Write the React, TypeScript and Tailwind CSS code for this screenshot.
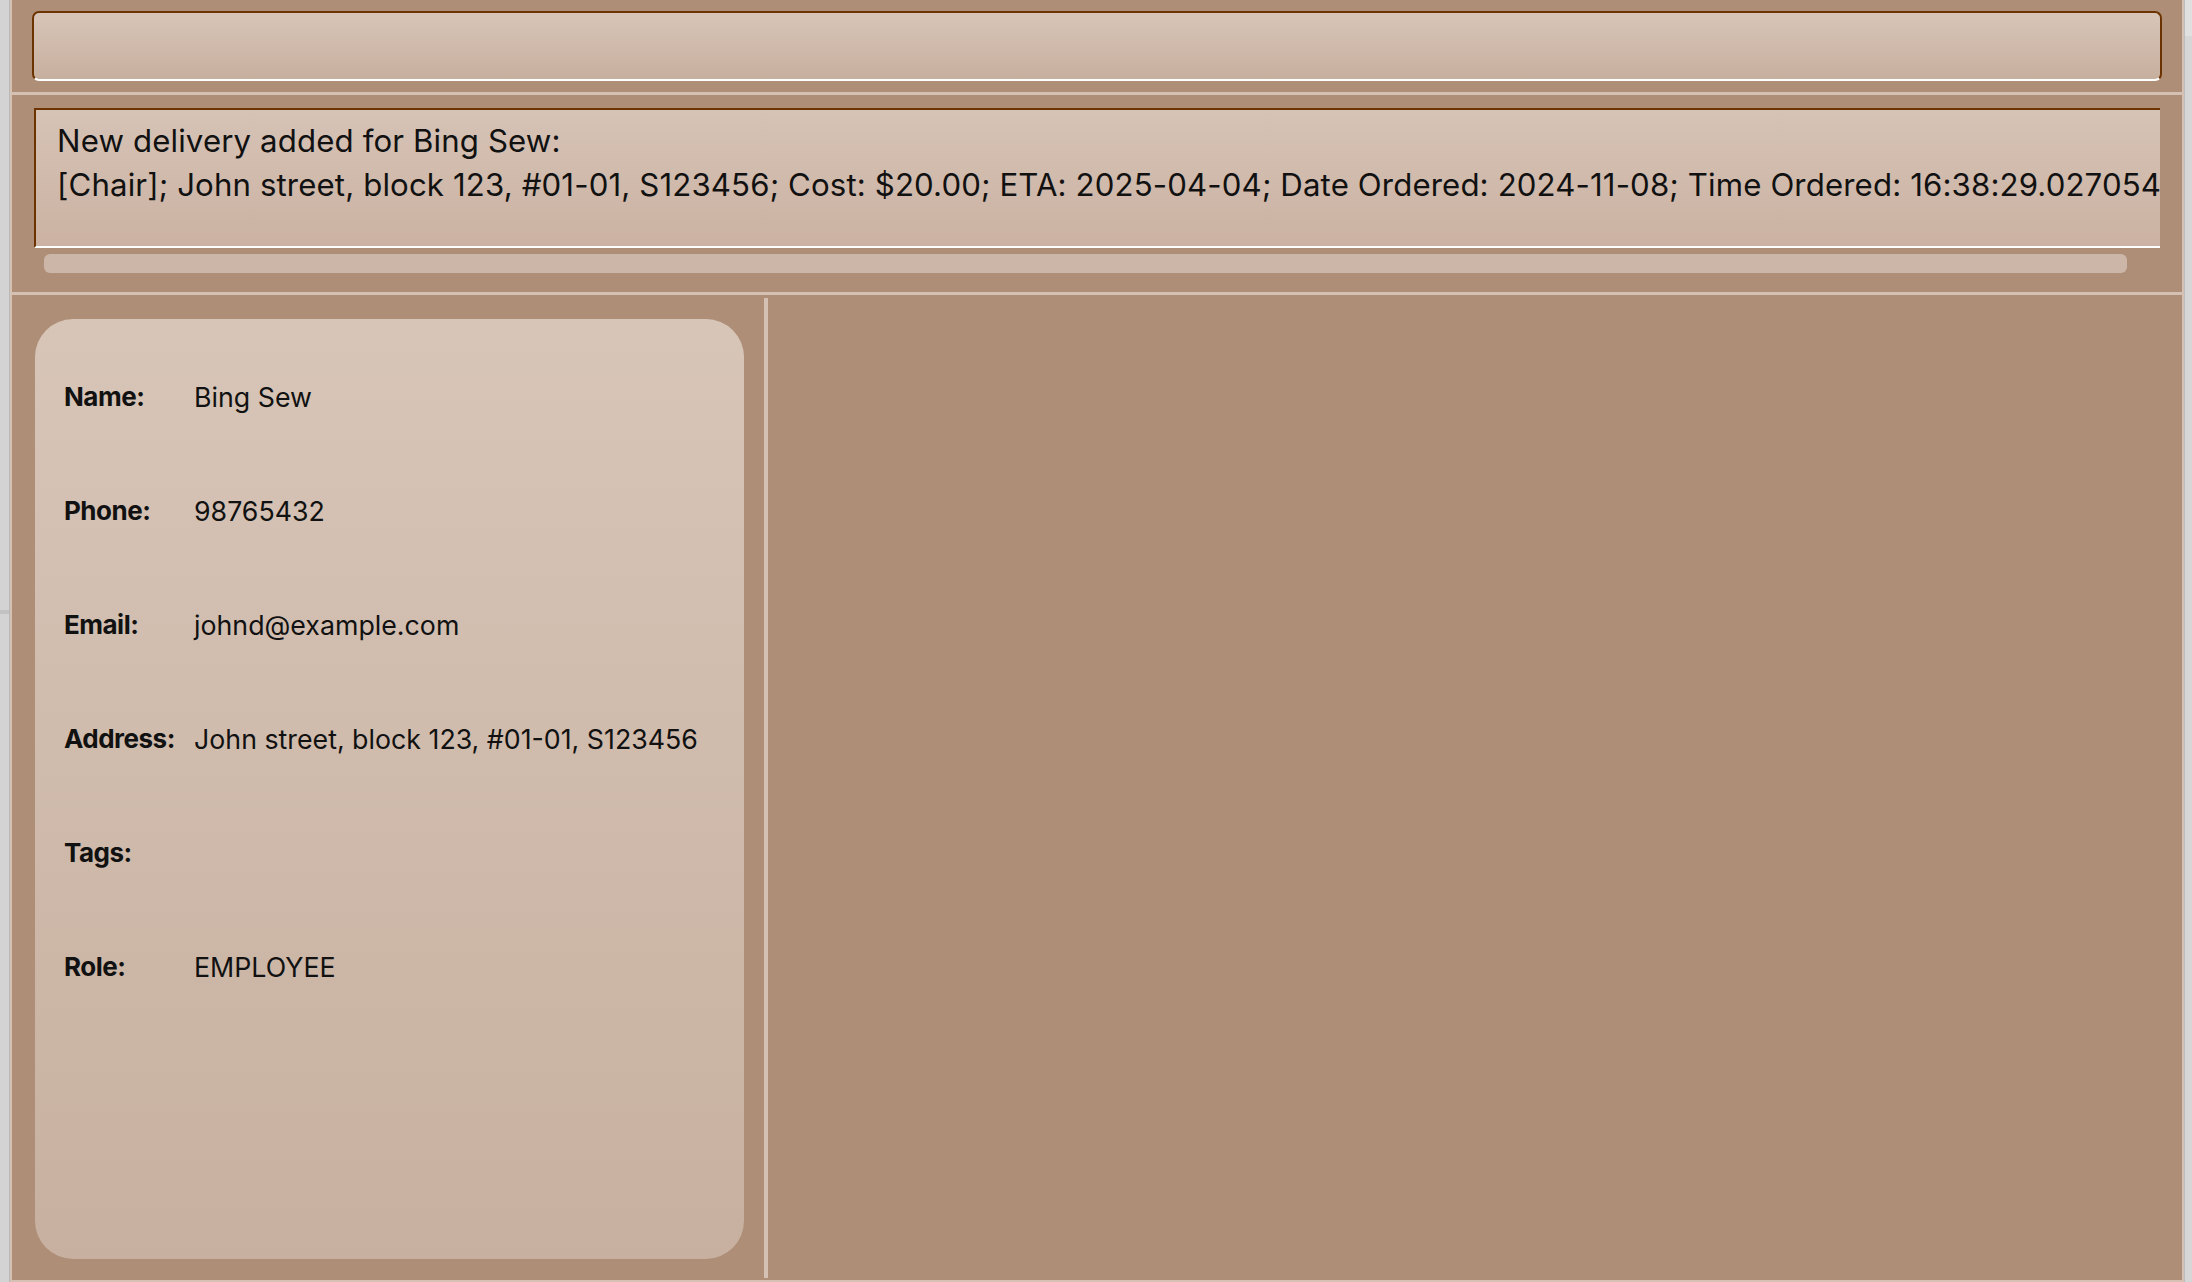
import React from "react";

const rows: [string, string][] = [
  ["Name:", "Bing Sew"],
  ["Phone:", "98765432"],
  ["Email:", "johnd@example.com"],
  ["Address:", "John street, block 123, #01-01, S123456"],
  ["Tags:", ""],
  ["Role:", "EMPLOYEE"],
];

export default function App() {
  return (
    <div
      className="flex h-[1282px] w-[2192px] overflow-hidden bg-[#d2d2d2]"
      style={{ fontFamily: "Inter, 'Noto Sans', sans-serif" }}
    >
      {/* left desktop strip */}
      <div className="flex w-[10px] shrink-0 flex-col border-r border-[#b9b9b9] bg-[#d3d3d3]">
        <div className="h-[610px]" />
        <div className="h-[4px] bg-[#c2c2c2]" />
      </div>

      {/* main window */}
      <div className="flex h-[1282px] w-[2174px] shrink-0 flex-col border-b-2 border-l-2 border-r-2 border-[#d4c1b3] bg-[#ae8e76]">
        {/* command box */}
        <div className="flex h-[92px] shrink-0 flex-col px-[20px] pt-[11px]">
          <div className="h-[70px] rounded-[7px] border-2 border-[#6b3300] border-b-white bg-gradient-to-b from-[#d7c5b8] to-[#c7af9e]" />
        </div>
        <div className="h-[3px] shrink-0 bg-[#d4c1b3]" />

        {/* result display */}
        <div className="flex h-[197px] shrink-0 flex-col pl-[22px] pr-[22px] pt-[13px]">
          <div className="h-[140px] border-l-2 border-t-2 border-b-2 border-[#6b3300] border-b-white bg-gradient-to-b from-[#d6c3b6] to-[#cbb2a2] pl-[21px] pt-[9px] text-[31.2px] leading-[44px] tracking-[0.13px] text-[#111] whitespace-nowrap overflow-hidden">
            <div>New delivery added for Bing Sew:</div>
            <div>
              [Chair]; John street, block 123, #01-01, S123456; Cost: $20.00; ETA: 2025-04-04; Date
              Ordered: 2024-11-08; Time Ordered: 16:38:29.027054
            </div>
          </div>
          <div className="ml-[10px] mr-[33px] mt-[6px] h-[19px] rounded-[6px] bg-[#ccb6a8]" />
        </div>
        <div className="h-[3px] shrink-0 bg-[#d4c1b3]" />

        {/* lower panes */}
        <div className="flex min-h-0 flex-1">
          <div className="w-[752px] shrink-0 pb-[21px] pl-[23px] pr-[20px] pt-[24px]">
            <div className="flex h-full flex-col rounded-[38px] bg-gradient-to-b from-[#d7c5b8] to-[#c7b09f] pl-[29px] pt-[60px]">
              {rows.map(([k, v]) => (
                <div key={k} className="flex h-[114px] shrink-0 items-start leading-[36px] text-[#111]">
                  <div className="w-[130px] shrink-0 text-[26px] font-bold tracking-[-0.5px]">{k}</div>
                  <div className="text-[26.75px]">{v}</div>
                </div>
              ))}
            </div>
          </div>
          <div className="mt-[3px] mb-[2px] w-[4px] shrink-0 bg-[#d4c1b3]" />
          <div className="flex-1" />
        </div>
      </div>

      {/* right desktop strip */}
      <div className="flex w-[8px] shrink-0 flex-col border-l border-[#bdbdbd] bg-[#d6d6d6]">
        <div className="h-[36px] bg-[#e0e0e0]" />
      </div>
    </div>
  );
}
